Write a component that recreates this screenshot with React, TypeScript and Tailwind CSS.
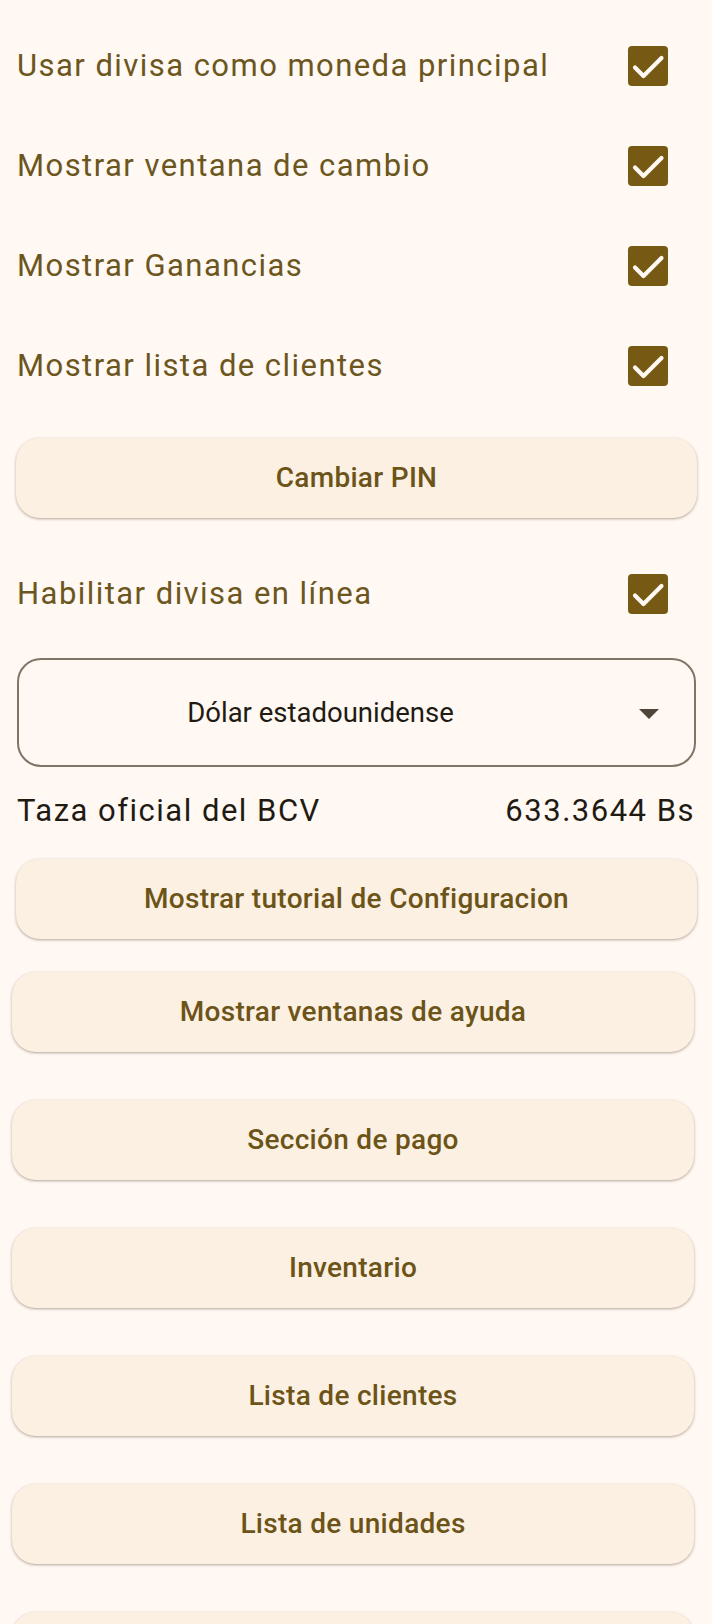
import React from 'react';

const toggles = [
  'Usar divisa como moneda principal',
  'Mostrar ventana de cambio',
  'Mostrar Ganancias',
  'Mostrar lista de clientes',
];

const menuButtons = [
  'Mostrar ventanas de ayuda',
  'Sección de pago',
  'Inventario',
  'Lista de clientes',
  'Lista de unidades',
];

const font = { fontFamily: 'Roboto, "Noto Sans", sans-serif' };

function CheckBox() {
  return (
    <div className="w-[40px] h-[40px] rounded-[4px] bg-[#765a14] flex items-center justify-center shrink-0">
      <svg viewBox="0 0 40 40" className="w-[40px] h-[40px]">
        <path
          d="M7 21.5 L15.5 30 L33.5 12"
          fill="none"
          stroke="#fff8f3"
          strokeWidth="4.2"
          strokeLinecap="round"
          strokeLinejoin="round"
        />
      </svg>
    </div>
  );
}

function ToggleRow({ label, className = '' }: { label: string; className?: string }) {
  return (
    <div className={`shrink-0 flex items-center justify-between h-[100px] pl-[17px] pr-[44px] ${className}`}>
      <span className="text-[31px] tracking-[1.45px] text-[#6c5620]">{label}</span>
      <CheckBox />
    </div>
  );
}

function TonalButton({ label, className = '' }: { label?: string; className?: string }) {
  return (
    <button
      className={`shrink-0 h-[80px] rounded-[24px] bg-[#fcf0e3] flex items-center justify-center text-[28px] font-medium tracking-[0.3px] text-[#6c5418] shadow-[0_1px_2px_rgba(80,60,30,0.3),0_1px_3px_1px_rgba(80,60,30,0.1)] ${className}`}
    >
      {label}
    </button>
  );
}

export default function App() {
  return (
    <div className="w-[712px] h-[1624px] overflow-hidden bg-[#fff8f3] flex flex-col pt-4" style={font}>
      {toggles.map((t) => (
        <ToggleRow key={t} label={t} />
      ))}

      <TonalButton label="Cambiar PIN" className="mt-[22px] ml-4 mr-[15px]" />

      <ToggleRow label="Habilitar divisa en línea" className="mt-[26px]" />

      <div className="shrink-0 mt-[14px] ml-[17px] mr-[16px] h-[109px] rounded-[24px] border-2 border-[#7f7667] flex items-center relative">
        <span className="flex-1 text-center text-[27.5px] text-[#1f1b13] pr-[72px]">Dólar estadounidense</span>
        <svg viewBox="0 0 20 10" className="absolute right-[35px] top-[49px] w-[20px] h-[10px]">
          <path d="M0 0 L20 0 L10 10 Z" fill="#4f4539" />
        </svg>
      </div>

      <div className="shrink-0 mt-4 h-[56px] flex items-center justify-between pl-[17px] pr-[17px] text-[31px] tracking-[1.5px] text-[#1f1b13]">
        <span>Taza oficial del BCV</span>
        <span>633.3644 Bs</span>
      </div>

      <TonalButton label="Mostrar tutorial de Configuracion" className="mt-[20px] ml-4 mr-[15px]" />

      <div className="shrink-0 flex flex-col gap-[48px] mt-[33px] ml-3 mr-[18px]">
        {menuButtons.map((b) => (
          <TonalButton key={b} label={b} />
        ))}
        {/* next entry, only its top edge shows */}
        <TonalButton />
      </div>
    </div>
  );
}
